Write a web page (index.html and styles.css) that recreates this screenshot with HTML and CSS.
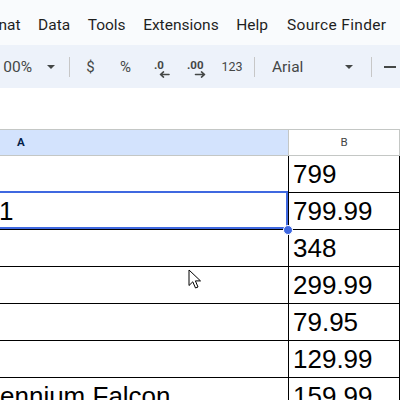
FILE: index.html
```html
<!DOCTYPE html>
<html>
<head>
<meta charset="utf-8">
<link rel="stylesheet" href="styles.css">
</head>
<body>
<div class="menubar">
  <span class="menu-item">nat</span>
  <span class="menu-item">Data</span>
  <span class="menu-item">Tools</span>
  <span class="menu-item">Extensions</span>
  <span class="menu-item">Help</span>
  <span class="menu-item">Source Finder</span>
</div>
<div class="toolbar">
  <span class="zoom">00%</span>
  <span class="caret caret-zoom"></span>
  <span class="sep sep-first"></span>
  <span class="btn btn-first">$</span>
  <span class="btn">%</span>
  <span class="btn">
    <svg class="dec-icon" width="18" height="22" viewBox="0 0 18 22">
      <text x="0" y="12" class="dec-text">.0</text>
      <path d="M6.5 17.5h8.5M6.5 17.5l3-2.6M6.5 17.5l3 2.6" stroke="#444746" stroke-width="1.6" fill="none" stroke-linecap="round"/>
    </svg>
  </span>
  <span class="btn">
    <svg class="dec-icon" width="21" height="22" viewBox="0 0 21 22">
      <text x="0" y="12" class="dec-text">.00</text>
      <path d="M8.5 17.5h9M17.5 17.5l-3-2.6M17.5 17.5l-3 2.6" stroke="#444746" stroke-width="1.6" fill="none" stroke-linecap="round"/>
    </svg>
  </span>
  <span class="btn num">123</span>
  <span class="sep sep-second"></span>
  <span class="font-name">Arial</span>
  <span class="caret caret-font"></span>
  <span class="sep sep-third"></span>
  <span class="minus"></span>
</div>
<div class="formula"></div>
<div class="sheet">
  <div class="row head">
    <div class="cell hcell ha">A</div>
    <div class="cell hcell hb">B</div>
  </div>
  <div class="row">
    <div class="cell ca"></div>
    <div class="cell cb">799</div>
  </div>
  <div class="row">
    <div class="cell ca selected"><span class="shift">1</span><div class="sel-box"></div><div class="sel-dot"></div></div>
    <div class="cell cb">799.99</div>
  </div>
  <div class="row">
    <div class="cell ca"></div>
    <div class="cell cb">348</div>
  </div>
  <div class="row">
    <div class="cell ca"></div>
    <div class="cell cb">299.99</div>
  </div>
  <div class="row">
    <div class="cell ca"></div>
    <div class="cell cb">79.95</div>
  </div>
  <div class="row">
    <div class="cell ca"></div>
    <div class="cell cb">129.99</div>
  </div>
  <div class="row">
    <div class="cell ca">ennium Falcon</div>
    <div class="cell cb">159.99</div>
  </div>
</div>
<svg class="cursor" width="14" height="21" viewBox="0 0 14 21">
  <path d="M1 1 L1 16.5 L4.8 12.8 L7.5 19 L10 18 L7.4 11.9 L12.5 11.9 Z" fill="#fff" stroke="#000" stroke-width="1" stroke-linejoin="round"/>
</svg>
</body>
</html>
```
FILE: styles.css
```css
html, body {
  margin: 0;
  padding: 0;
}
body {
  width: 400px;
  height: 400px;
  overflow: hidden;
  position: relative;
  background: #f9fbfd;
  font-family: Roboto, "Liberation Sans", sans-serif;
}
.menubar {
  height: 45px;
  box-sizing: border-box;
  padding-top: 15px;
  display: flex;
  gap: 17.5px;
  font-size: 15.5px;
  line-height: 20px;
  color: #1f1f1f;
  white-space: nowrap;
}
.menu-item:first-child {
  margin-left: -1.5px;
}
.menu-item:last-child {
  margin-left: 1.5px;
  letter-spacing: 0.35px;
}
.toolbar {
  height: 43px;
  background: #edf2fa;
  display: flex;
  align-items: center;
  color: #444746;
  white-space: nowrap;
}
.zoom {
  width: 32px;
  text-align: right;
  font-size: 15.5px;
}
.caret {
  width: 0;
  height: 0;
  border-left: 4px solid transparent;
  border-right: 4px solid transparent;
  border-top: 4px solid #444746;
}
.caret-zoom {
  margin-left: 15px;
  margin-right: 14px;
}
.sep {
  width: 1px;
  height: 20px;
  background: #c7c7c7;
}
.btn {
  width: 35px;
  display: flex;
  justify-content: center;
  align-items: center;
  font-size: 15px;
  height: 28px;
}
.btn-first {
  margin-left: 3px;
}
.num {
  font-size: 12.5px;
  padding-left: 3px;
  box-sizing: border-box;
}
.dec-icon {
  display: block;
  margin-left: 4px;
  margin-top: 2px;
}
.dec-text {
  font-family: Roboto, sans-serif;
  font-size: 11.5px;
  font-weight: 700;
  fill: #444746;
}
.sep-second {
  margin-left: 6px;
}
.font-name {
  margin-left: 17px;
  font-size: 15.5px;
  width: 73px;
}
.caret-font {
  margin-right: 18px;
}
.minus {
  margin-left: 12px;
  width: 12px;
  height: 2px;
  background: #444746;
}
.formula {
  height: 41px;
  background: #ffffff;
}
.sheet {
  background: #ffffff;
}
.row {
  display: grid;
  grid-template-columns: 289px 111px;
}
.cell {
  height: 36px;
  border-right: 1px solid #000;
  border-bottom: 1px solid #000;
  font-family: "Liberation Sans", Arial, sans-serif;
  font-size: 26px;
  line-height: 36px;
  color: #000;
  white-space: nowrap;
  overflow: visible;
}
.head {
  border-top: 1px solid #c4c7c5;
}
.hcell {
  height: 25px;
  line-height: 25px;
  border-right: 1px solid #c4c7c5;
  border-bottom: 1px solid #c4c7c5;
  font-family: Roboto, sans-serif;
  font-size: 11.5px;
}
.ha {
  background: #d3e3fd;
  color: #041e49;
  font-weight: 700;
  padding-left: 17px;
}
.hb {
  color: #444746;
  text-align: center;
}
.ca {
  padding-left: 0;
  overflow: hidden;
}
.cb {
  padding-left: 4px;
}
.selected {
  position: relative;
  overflow: visible;
}
.shift {
  margin-left: -1px;
}
.sel-box {
  position: absolute;
  top: -2px;
  bottom: 0;
  left: -10px;
  right: 0;
  border: 2px solid #3f68e0;
}
.sel-dot {
  position: absolute;
  right: -5px;
  bottom: -6px;
  width: 8px;
  height: 8px;
  border-radius: 50%;
  background: #3f68e0;
  border: 1px solid #fff;
  z-index: 2;
}
.cursor {
  position: absolute;
  left: 188px;
  top: 269px;
}
```
